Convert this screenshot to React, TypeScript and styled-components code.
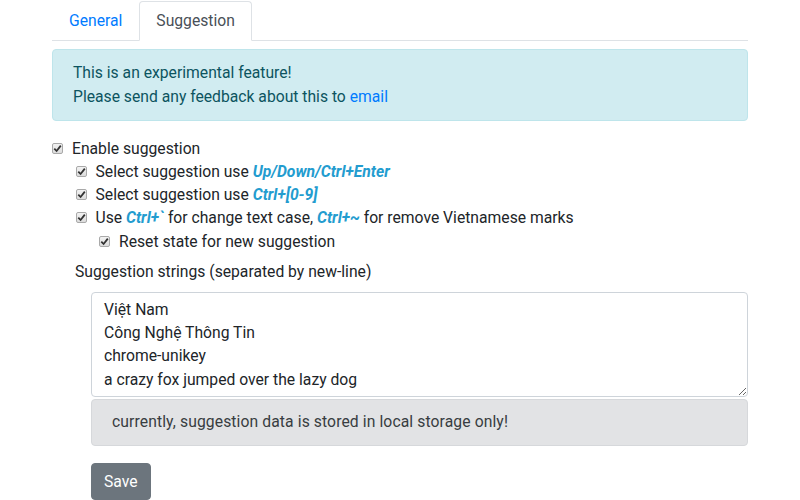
import React from "react";
import styled, { createGlobalStyle } from "styled-components";

const Global = createGlobalStyle`
  html, body { margin: 0; padding: 0; background: #fff; }
  body {
    font-family: Roboto, "Noto Sans", "Liberation Sans", sans-serif;
    font-size: 15.7px;
    line-height: 1.5;
    color: #212529;
  }
  * { box-sizing: border-box; }
`;

const Page = styled.div`
  width: 696px;
  margin-left: 52px;
`;

const Tabs = styled.ul`
  display: flex;
  list-style: none;
  margin: 0;
  padding: 1px 0 0 0;
  border-bottom: 1px solid #dee2e6;
`;

const Tab = styled.li<{ $active?: boolean }>`
  margin-bottom: -1px;
  padding: 6.5px 16px 7.5px;
  border: 1px solid transparent;
  border-color: ${(p) => (p.$active ? "#dee2e6 #dee2e6 #fff" : "transparent")};
  border-top-left-radius: 4px;
  border-top-right-radius: 4px;
  background: ${(p) => (p.$active ? "#fff" : "transparent")};
  color: ${(p) => (p.$active ? "#495057" : "#007bff")};
  cursor: pointer;
`;

const Content = styled.div`
  padding-top: 8px;
`;

const Alert = styled.div<{ $kind: "info" | "secondary" }>`
  padding: 11px 20px;
  border: 1px solid ${(p) => (p.$kind === "info" ? "#bee5eb" : "#d6d8db")};
  border-radius: 4px;
  background: ${(p) => (p.$kind === "info" ? "#d1ecf1" : "#e2e3e5")};
  color: ${(p) => (p.$kind === "info" ? "#0c5460" : "#383d41")};
  line-height: 24px;
`;

const InfoAlert = styled(Alert)`
  margin-bottom: 16px;
`;

const Link = styled.a`
  color: #007bff;
  text-decoration: none;
`;

const Options = styled.div`
  display: flex;
  flex-direction: column;
`;

const Row = styled.label<{ $level: number }>`
  display: flex;
  align-items: center;
  gap: 9px;
  padding-left: ${(p) => p.$level * 23.5}px;
  line-height: 23.25px;
`;

const Box = styled.span`
  width: 11px;
  height: 11px;
  border: 1px solid #a9a9a9;
  border-radius: 2px;
  background: linear-gradient(#f2f2f2, #dcdcdc);
  display: inline-flex;
  align-items: center;
  justify-content: center;
  flex: none;
`;

const Key = styled.b`
  color: #239ccf;
  font-style: italic;
  font-weight: 700;
`;

const Label = styled.div`
  margin: 7px 0 8.5px 23px;
  line-height: 23.25px;
`;

const Field = styled.div`
  margin-left: 39px;
  display: flex;
  flex-direction: column;
  gap: 2px;
`;

const TextArea = styled.textarea`
  height: 105px;
  padding: 5px 12px;
  border: 1px solid #ced4da;
  border-radius: 4px;
  font: inherit;
  line-height: 23.4px;
  color: #212529;
  resize: vertical;
  overflow: hidden;
`;

const Note = styled(Alert)`
  padding-top: 10.5px;
  padding-bottom: 10.5px;
  letter-spacing: 0.1px;
`;

const SaveButton = styled.button`
  align-self: flex-start;
  margin-top: 15px;
  padding: 6px 12px;
  border: 1px solid #6c757d;
  border-radius: 4px;
  background: #6c757d;
  color: #fff;
  font: inherit;
  line-height: 23.25px;
`;

function Check() {
  return (
    <Box>
      <svg width="9" height="9" viewBox="0 0 9 9">
        <path d="M1.3 4.6 L3.6 7 L7.8 1.6" fill="none" stroke="#333" strokeWidth="1.8" />
      </svg>
    </Box>
  );
}

export default function App() {
  return (
    <>
      <Global />
      <Page>
        <Tabs>
          <Tab>General</Tab>
          <Tab $active>Suggestion</Tab>
        </Tabs>
        <Content>
          <InfoAlert $kind="info">
            This is an experimental feature!
            <br />
            Please send any feedback about this to <Link href="#">email</Link>
          </InfoAlert>
          <Options>
            <Row $level={0}>
              <Check />
              Enable suggestion
            </Row>
            <Row $level={1}>
              <Check />
              <span>
                Select suggestion use <Key>Up/Down/Ctrl+Enter</Key>
              </span>
            </Row>
            <Row $level={1}>
              <Check />
              <span>
                Select suggestion use <Key>Ctrl+[0-9]</Key>
              </span>
            </Row>
            <Row $level={1}>
              <Check />
              <span>
                Use <Key>Ctrl+`</Key> for change text case, <Key>Ctrl+~</Key> for remove Vietnamese marks
              </span>
            </Row>
            <Row $level={2}>
              <Check />
              Reset state for new suggestion
            </Row>
          </Options>
          <Label>Suggestion strings (separated by new-line)</Label>
          <Field>
            <TextArea
              defaultValue={"Việt Nam\nCông Nghệ Thông Tin\nchrome-unikey\na crazy fox jumped over the lazy dog"}
            />
            <Note $kind="secondary">currently, suggestion data is stored in local storage only!</Note>
            <SaveButton>Save</SaveButton>
          </Field>
        </Content>
      </Page>
    </>
  );
}
